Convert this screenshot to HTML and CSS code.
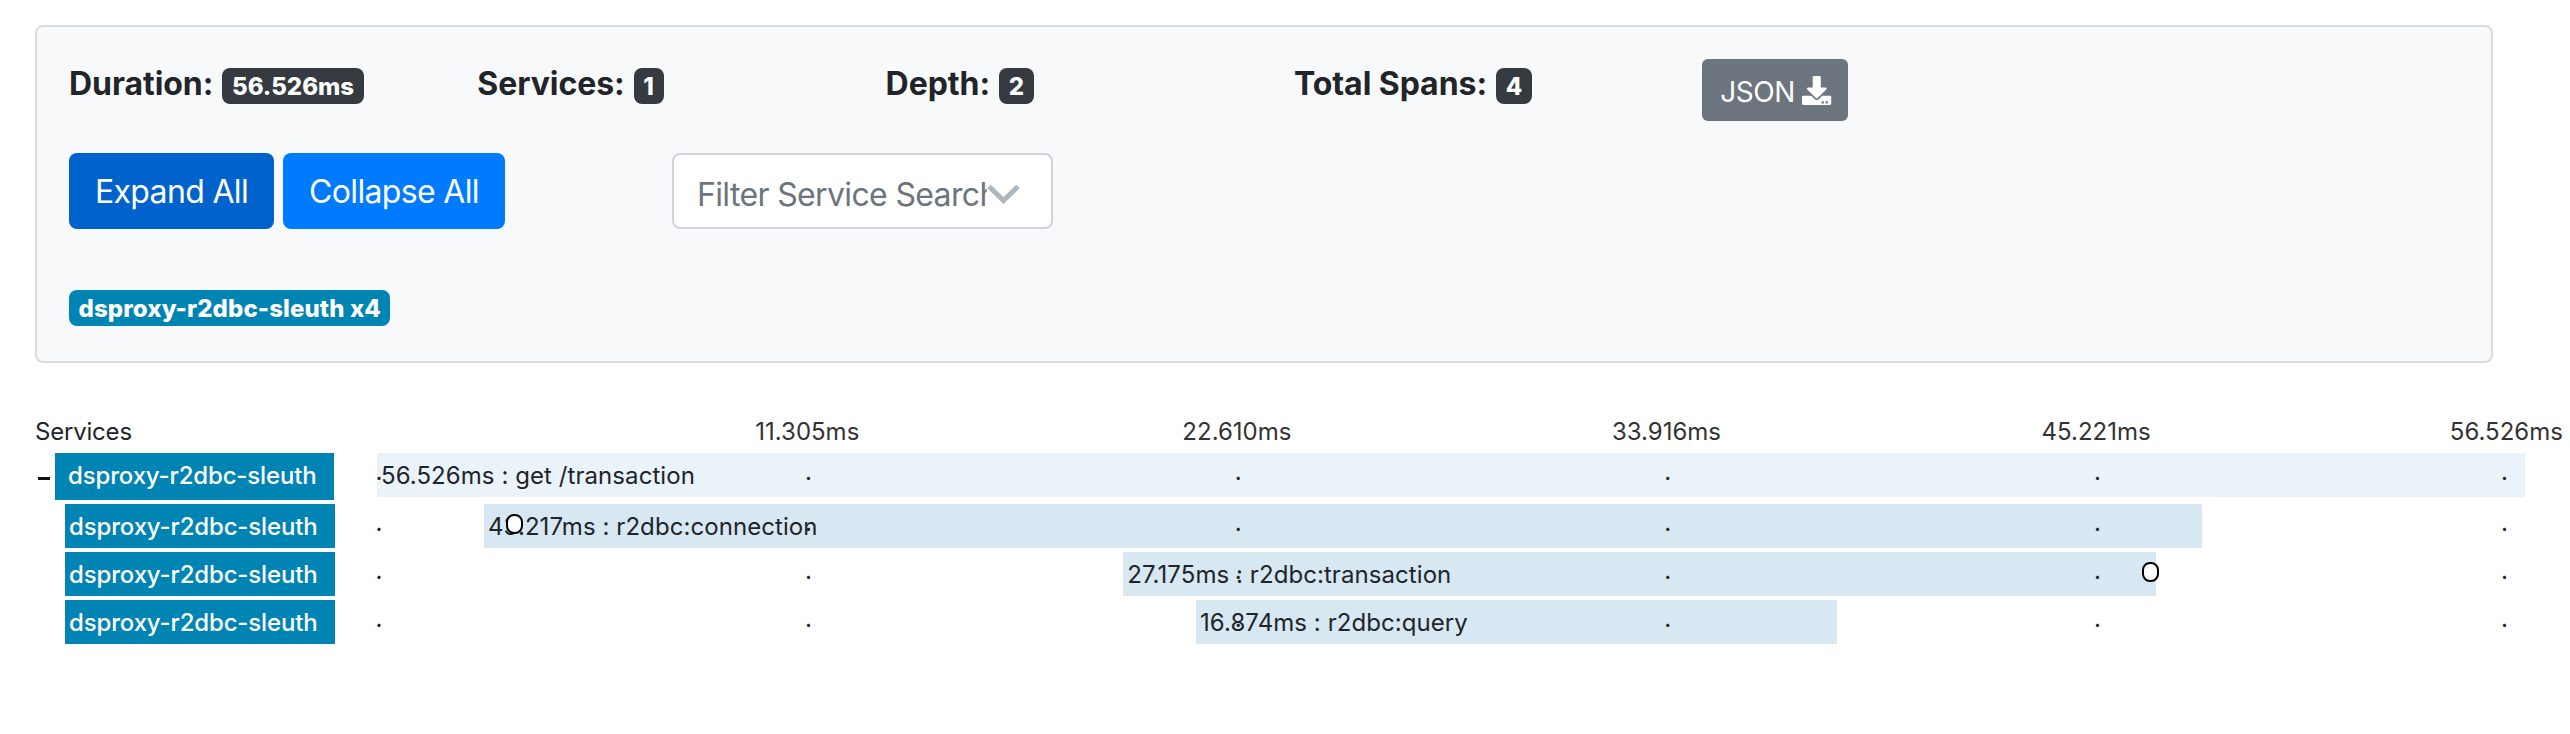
FILE: index.html
```html
<!DOCTYPE html>
<html lang="en">
<head>
<meta charset="utf-8">
<title>Trace detail</title>
<link rel="stylesheet" href="styles.css">
</head>
<body>
<section class="panel">
  <div class="stats">
    <div class="stat"><span class="stat-label">Duration:</span><span class="badge badge-dark">56.526ms</span></div>
    <div class="stat"><span class="stat-label">Services:</span><span class="badge badge-dark">1</span></div>
    <div class="stat"><span class="stat-label">Depth:</span><span class="badge badge-dark">2</span></div>
    <div class="stat"><span class="stat-label">Total Spans:</span><span class="badge badge-dark">4</span></div>
    <button class="btn-json" type="button"><span>JSON</span>
      <svg class="icon-download" viewBox="0 0 30 30" width="30" height="30" fill="currentColor">
        <path d="M12 0h5.500a1.300 1.300 0 0 1 1.300 1.300V11.500h4.600c1.200 0 1.700 1.200.900 2L15.600 22c-.500.500-1.200.500-1.700 0L5.300 13.500c-.800-.800-.300-2 .900-2h4.500V1.300A1.300 1.300 0 0 1 12 0z"/>
        <path fill-rule="evenodd" d="M1.400 19.700h7.900l3.200 3.200c1.300 1.300 3.300 1.300 4.600 0l3.200-3.200H27.800c.800 0 1.400.600 1.400 1.400v6.500c0 .800-.600 1.400-1.400 1.400H1.400c-.800 0-1.400-.600-1.400-1.400v-6.500c0-.800.600-1.400 1.400-1.400zM19.700 25.200v2.200h2.200v-2.200zm3.900 0v2.200h2.200v-2.200z"/>
      </svg>
    </button>
  </div>
  <div class="controls">
    <button class="btn btn-active" type="button">Expand All</button>
    <button class="btn btn-collapse" type="button">Collapse All</button>
    <div class="select">
      <span class="select-text">Filter Service Search</span>
      <svg class="chevron" viewBox="0 0 33 20" width="33" height="20"><path d="M2 2.500 16.500 16.500 31 2.500" fill="none" stroke="#adb5bd" stroke-width="5"/></svg>
    </div>
  </div>
  <div class="tags"><span class="badge badge-service">dsproxy-r2dbc-sleuth x4</span></div>
</section>

<section class="timeline">
  <div class="row row-head">
    <div class="head-label">Services</div>
    <div class="ticks"><span>11.305ms</span><span>22.610ms</span><span>33.916ms</span><span>45.221ms</span><span class="tick-last">56.526ms</span></div>
  </div>
  <div class="row row-root">
    <div class="name"><span class="toggle"></span><span class="service">dsproxy-r2dbc-sleuth</span></div>
    <div class="track">
      <div class="bar" style="margin-left:0;width:100%">56.526ms : get /transaction</div>
      <div class="dots"><i>.</i><i>.</i><i>.</i><i>.</i><i>.</i><i>.</i></div>
    </div>
  </div>
  <div class="row">
    <div class="name"><span class="service">dsproxy-r2dbc-sleuth</span></div>
    <div class="track">
      <div class="bar" style="margin-left:4.980%;width:80%">43.217ms : r2dbc:connection</div>
      <div class="dots"><i>.</i><i>.</i><i>.</i><i>.</i><i>.</i><i>.</i></div>
      <b class="mark" style="left:6.010%"></b>
    </div>
  </div>
  <div class="row">
    <div class="name"><span class="service">dsproxy-r2dbc-sleuth</span></div>
    <div class="track">
      <div class="bar" style="margin-left:34.740%;width:48.090%">27.175ms : r2dbc:transaction</div>
      <div class="dots"><i>.</i><i>.</i><i>.</i><i>.</i><i>.</i><i>.</i></div>
      <b class="mark" style="left:82.170%"></b>
    </div>
  </div>
  <div class="row">
    <div class="name"><span class="service">dsproxy-r2dbc-sleuth</span></div>
    <div class="track">
      <div class="bar" style="margin-left:38.130%;width:29.840%">16.874ms : r2dbc:query</div>
      <div class="dots"><i>.</i><i>.</i><i>.</i><i>.</i><i>.</i><i>.</i></div>
    </div>
  </div>
</section>
</body>
</html>
```
FILE: styles.css
```css
* { box-sizing: border-box; }

body {
  margin: 0;
  padding: 25px 0 0 35px;
  background: #fff;
  color: #212529;
  font-family: Inter, "Liberation Sans", sans-serif;
  font-size: 24px;
  overflow: hidden;
}

button { font: inherit; border: 0; margin: 0; }

/* summary panel */
.panel {
  width: 2458px;
  height: 338px;
  padding: 32px;
  border: 2px solid #d9dbdd;
  border-radius: 8px;
  background: #f8f9fb;
}

.stats {
  display: grid;
  grid-template-columns: repeat(4, 408.300px) auto;
  justify-content: start;
  align-items: start;
  height: 94px;
}

.stat {
  display: flex;
  align-items: flex-start;
  gap: 9px;
  padding-top: 6px;
}

.stat-label {
  font-size: 32px;
  font-weight: 700;
  line-height: 38px;
  letter-spacing: -0.050px;
}

.stat .badge { margin-top: 3px; }

.badge {
  display: inline-block;
  height: 36px;
  padding: 0 9.600px;
  border-radius: 8px;
  color: #fff;
  font-size: 24px;
  font-weight: 800;
  line-height: 37px;
}

.badge-dark { background: #343a40; }
.badge-service { background: #0084b4; letter-spacing: 0.100px; }

.btn-json {
  display: flex;
  align-items: flex-start;
  width: 146px;
  height: 62px;
  padding: 17px 0 0 18px;
  border-radius: 6px;
  background: #6c757d;
  color: #fff;
  font-size: 28px;
  line-height: 30px;
  letter-spacing: -0.400px;
}

.btn-json span { padding-top: 1px; margin-right: 7px; }

.controls { display: flex; height: 137px; }

.btn {
  width: 205px;
  height: 76px;
  padding: 1px 0 0;
  border-radius: 8px;
  background: #007bff;
  color: #fff;
  font-size: 32px;
  line-height: 75px;
  letter-spacing: -0.650px;
}

.btn-active { background: #0062cc; }
.btn-collapse { width: 222px; margin-left: 9px; }

.select {
  display: flex;
  align-items: flex-start;
  width: 381px;
  height: 76px;
  margin-left: 167px;
  padding: 4px 0 0 23px;
  border: 2px solid #ced4da;
  border-radius: 8px;
  background: #fff;
}

.select-text {
  width: 290px;
  overflow: hidden;
  color: #6c757d;
  font-size: 32px;
  line-height: 72px;
  letter-spacing: -0.650px;
  white-space: nowrap;
}

.chevron { margin-top: 25px; }

.tags { display: flex; }

/* span timeline */
.timeline { padding-top: 50px; }

.row {
  display: grid;
  grid-template-columns: 342px 2148px;
  grid-template-rows: 100%;
  height: 44px;
  margin-bottom: 4px;
}

.row-head { height: 36px; line-height: 37px; }
.head-label { letter-spacing: -0.200px; }

.ticks {
  display: flex;
  padding-left: 215.500px;
  color: #333;
}

.ticks span { flex: none; width: 429.600px; text-align: center; }
.ticks .tick-last { width: 115px; margin-left: 138px; }

.row-root { height: 47px; }

.name {
  display: flex;
  justify-content: flex-end;
  width: 300px;
}

.row-root .name { width: 299px; }

.service {
  width: 270px;
  padding-left: 4px;
  background: #0084b4;
  color: #fff;
  font-weight: 500;
  line-height: 45px;
  letter-spacing: -0.150px;
}

.row-root .service { width: 279px; padding-left: 13px; }

.toggle {
  width: 12px;
  height: 3px;
  margin: 24px 5px 0 0;
  background: #111;
}

.track { position: relative; height: 44px; }

.bar {
  height: 44px;
  padding-left: 4px;
  background: #d8e8f2;
  line-height: 45px;
  letter-spacing: 0.070px;
  white-space: nowrap;
}

.row-root .bar { background: #eaf2fa; }

/* scale dots drawn over the bars */
.dots {
  position: absolute;
  inset: 0;
  display: flex;
  margin-left: -1.500px;
  color: #222;
  line-height: 37px;
}

.dots i { width: 429.600px; font-style: normal; }
.dots i:nth-child(5) { width: 407px; }
.dots i:last-child { width: auto; }

/* annotation marker on a span */
.mark {
  position: absolute;
  top: 10px;
  width: 17px;
  height: 20px;
  border: 2px solid #000;
  border-radius: 8px;
  background: #fff;
}
```
